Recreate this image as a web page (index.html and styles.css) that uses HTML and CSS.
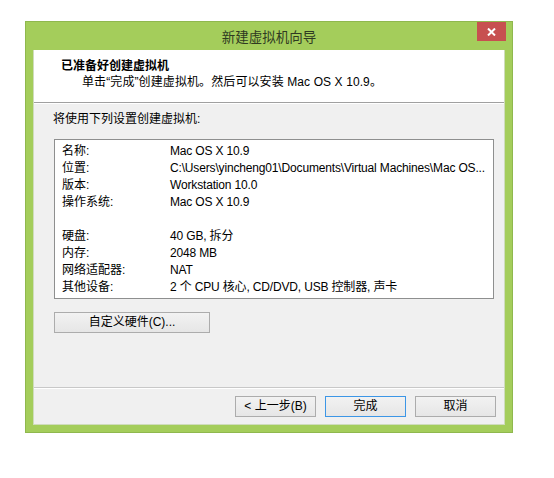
FILE: index.html
```html
<!DOCTYPE html>
<html lang="zh-CN">
<head>
<meta charset="utf-8">
<title>新建虚拟机向导</title>
<link rel="stylesheet" href="styles.css">
</head>
<body>
<div class="window">
  <div class="titlebar">
    <span class="title">新建虚拟机向导</span>
    <button class="close" aria-label="关闭">
      <svg width="9" height="8" viewBox="0 0 9 8"><path d="M1 0.5 L8 7.5 M8 0.5 L1 7.5" stroke="#fff" stroke-width="2" fill="none"/></svg>
    </button>
  </div>
  <div class="client">
    <div class="header">
      <div class="header-title">已准备好创建虚拟机</div>
      <div class="header-sub">单击“完成”创建虚拟机。然后可以安装 Mac OS X 10.9。</div>
    </div>
    <div class="body">
      <div class="intro">将使用下列设置创建虚拟机:</div>
      <div class="summary">
        <div class="row"><span class="key">名称:</span><span class="val">Mac OS X 10.9</span></div>
        <div class="row"><span class="key">位置:</span><span class="val">C:\Users\yincheng01\Documents\Virtual Machines\Mac OS...</span></div>
        <div class="row"><span class="key">版本:</span><span class="val">Workstation 10.0</span></div>
        <div class="row"><span class="key">操作系统:</span><span class="val">Mac OS X 10.9</span></div>
        <div class="row"><span class="key"></span><span class="val"></span></div>
        <div class="row"><span class="key">硬盘:</span><span class="val">40 GB, 拆分</span></div>
        <div class="row"><span class="key">内存:</span><span class="val">2048 MB</span></div>
        <div class="row"><span class="key">网络适配器:</span><span class="val">NAT</span></div>
        <div class="row"><span class="key">其他设备:</span><span class="val">2 个 CPU 核心, CD/DVD, USB 控制器, 声卡</span></div>
      </div>
      <button class="btn btn-custom">自定义硬件(C)...</button>
    </div>
    <div class="footer">
      <button class="btn">&lt; 上一步(B)</button>
      <button class="btn btn-default">完成</button>
      <button class="btn">取消</button>
    </div>
  </div>
</div>
</body>
</html>
```

FILE: styles.css
```css
html, body {
  margin: 0;
  padding: 0;
  background: #ffffff;
}

body {
  font-family: "Liberation Sans", "Noto Sans CJK SC", sans-serif;
  font-size: 12px;
  color: #000;
}

/* Window frame: lime accent border around the client area */
.window {
  box-sizing: border-box;
  width: 488px;
  height: 412px;
  margin: 21px 0 0 25px;
  background: #a4cd5b;
  border: 1px solid #8fb84e;
  padding: 0 7px 7px 7px;
  display: flex;
  flex-direction: column;
}

.titlebar {
  height: 28px;
  flex: none;
  display: grid;
  grid-template-columns: 1fr auto 1fr;
  align-items: center;
}

.title {
  grid-column: 2;
  font-family: "Noto Sans CJK SC", sans-serif;
  font-size: 13.5px;
  color: #2f3a22;
  line-height: 28px;
}

.close {
  grid-column: 3;
  justify-self: end;
  align-self: start;
  width: 29px;
  height: 19px;
  margin-right: -1px;
  padding: 0;
  border: none;
  background: #c75050;
  display: flex;
  align-items: center;
  justify-content: center;
}

.client {
  flex: 1;
  background: #f0f0f0;
  display: flex;
  flex-direction: column;
  box-shadow: inset 0 0 0 1px #cfdcbc;
}

.header {
  height: 53px;
  box-sizing: border-box;
  background: #fff;
  border-bottom: 1px solid #a0a0a0;
  box-shadow: 0 1px 0 #fff;
  padding: 8px 0 0 27px;
  margin: 0 1px;
}

.header-title {
  font-weight: bold;
  line-height: 16px;
  font-size: 12px;
}

.header-sub {
  line-height: 17px;
  padding-left: 21px;
  letter-spacing: 0.1px;
}

.body {
  flex: 1;
  padding: 8px 11px 0 21px;
  display: flex;
  flex-direction: column;
  align-items: flex-start;
}

.intro {
  line-height: 17px;
  margin-left: -1px;
}

.summary {
  align-self: stretch;
  margin-top: 11px;
  background: #fff;
  border: 1px solid #8e8f8f;
  padding: 3px 0 2px 7px;
}

.row {
  display: flex;
  height: 17px;
  line-height: 17px;
  white-space: nowrap;
}

.key {
  width: 108px;
  flex: none;
}

.val {
  letter-spacing: -0.16px;
}

.btn {
  font-family: "Liberation Sans", "Noto Sans CJK SC", sans-serif;
  font-size: 12px;
  color: #000;
  box-sizing: border-box;
  height: 21px;
  width: 81px;
  padding: 0;
  line-height: 19px;
  background: linear-gradient(#f2f2f2, #e6e6e6);
  border: 1px solid #acacac;
  border-radius: 0;
}

.btn-custom {
  width: 156px;
  margin-top: 13px;
}

.btn-default {
  border-color: #3c96e6;
}

.footer {
  flex: none;
  height: 37px;
  box-sizing: border-box;
  border-top: 1px solid #c8c8c8;
  box-shadow: inset 0 1px 0 #fff;
  padding: 8px 8px 0 0;
  margin: 0 1px 1px;
  display: flex;
  justify-content: flex-end;
  align-items: flex-start;
  gap: 9px;
}
```
